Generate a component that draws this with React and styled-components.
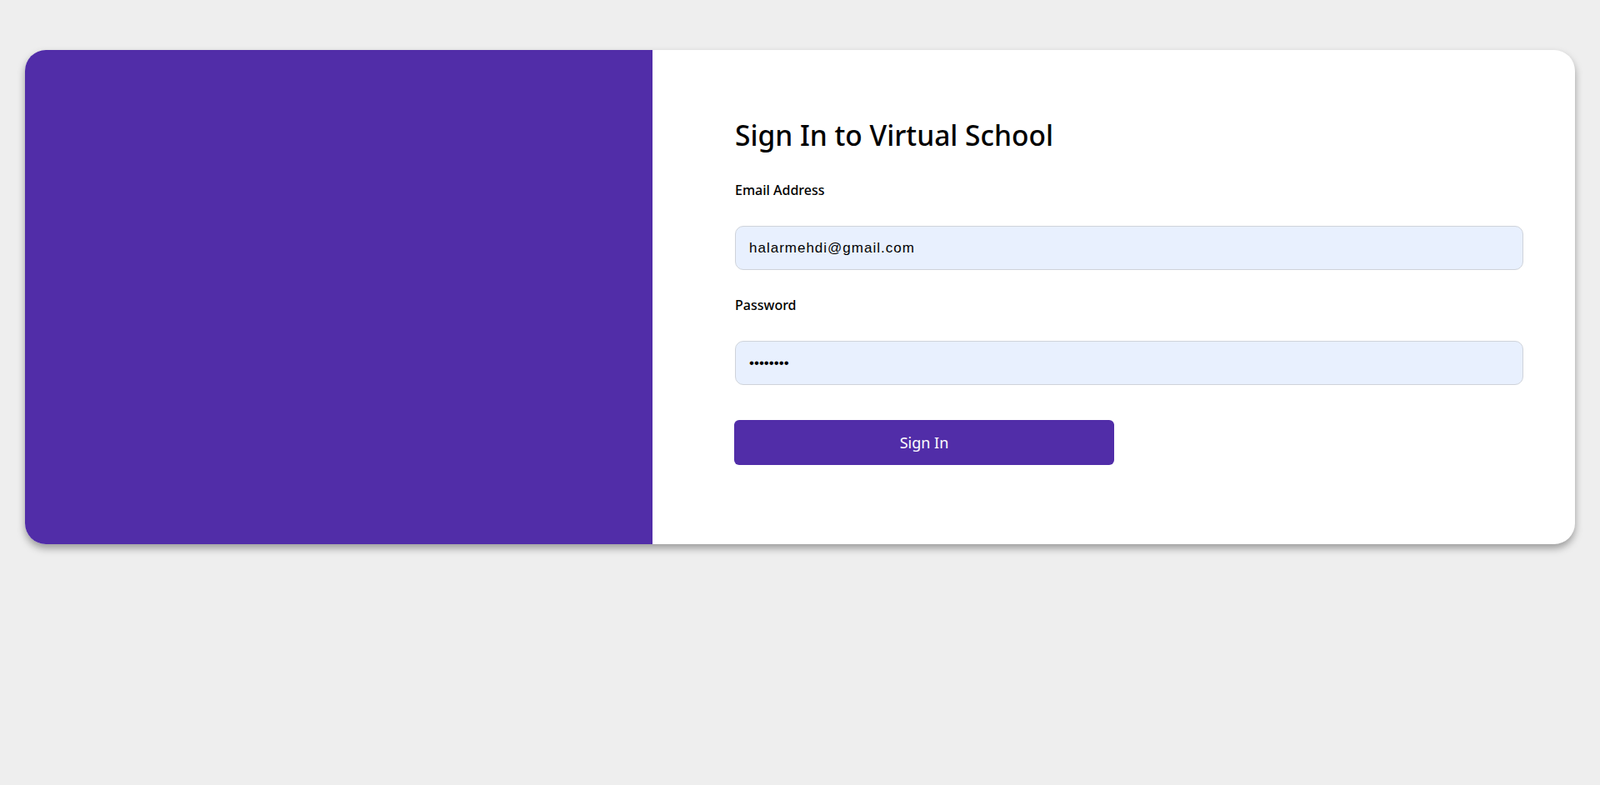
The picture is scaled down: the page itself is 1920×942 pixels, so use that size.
import styled, { createGlobalStyle } from 'styled-components';

const Global = createGlobalStyle`
  * { box-sizing: border-box; }
  body { margin: 0; background: #eeeeee; font-family: "Noto Sans", "Open Sans", sans-serif; }
`;

const Page = styled.div`
  padding: 60px 30px;
`;
const Card = styled.div`
  display: flex;
  background: #fff;
  border-radius: 25px;
  overflow: hidden;
  box-shadow: 0 5px 10px rgba(0, 0, 0, 0.35);
`;
const Side = styled.div`
  width: 753px;
  flex-shrink: 0;
  background: #512da8;
`;
const Panel = styled.div`
  flex: 1;
  padding: 82px 62px 95px 99px;
`;
const Title = styled.h1`
  margin: 0 0 36px;
  font-size: 33.5px;
  line-height: 40px;
  font-weight: 500;
  color: #000;
`;
const Label = styled.label`
  display: block;
  font-size: 16px;
  line-height: 20px;
  font-weight: 500;
  color: #000;
  margin-bottom: 33px;
`;
const Input = styled.input`
  display: block;
  width: 100%;
  height: 53px;
  padding: 0 16px;
  border: 1px solid #cfd3da;
  border-radius: 10px;
  background: #e8f0fe;
  font-family: "Liberation Sans", Arial, sans-serif;
  font-size: 17px;
  letter-spacing: ${({ $dots }) => ($dots ? '0' : '1px')};
  color: #000;
  margin-bottom: ${({ $last }) => ($last ? '42px' : '32px')};
  outline: none;
`;
const Button = styled.button`
  display: block;
  width: 456px;
  height: 54px;
  margin-left: -1px;
  border: none;
  border-radius: 6px;
  background: #512da8;
  color: #fff;
  font-family: "Noto Sans", "Open Sans", sans-serif;
  font-size: 18px;
  cursor: pointer;
`;

export default function App() {
  return (
    <>
      <Global />
      <Page>
        <Card>
          <Side />
          <Panel>
            <Title>Sign In to Virtual School</Title>
            <Label>Email Address</Label>
            <Input type="email" defaultValue="halarmehdi@gmail.com" />
            <Label>Password</Label>
            <Input type="password" defaultValue="12345678" $dots $last />
            <Button>Sign In</Button>
          </Panel>
        </Card>
      </Page>
    </>
  );
}
